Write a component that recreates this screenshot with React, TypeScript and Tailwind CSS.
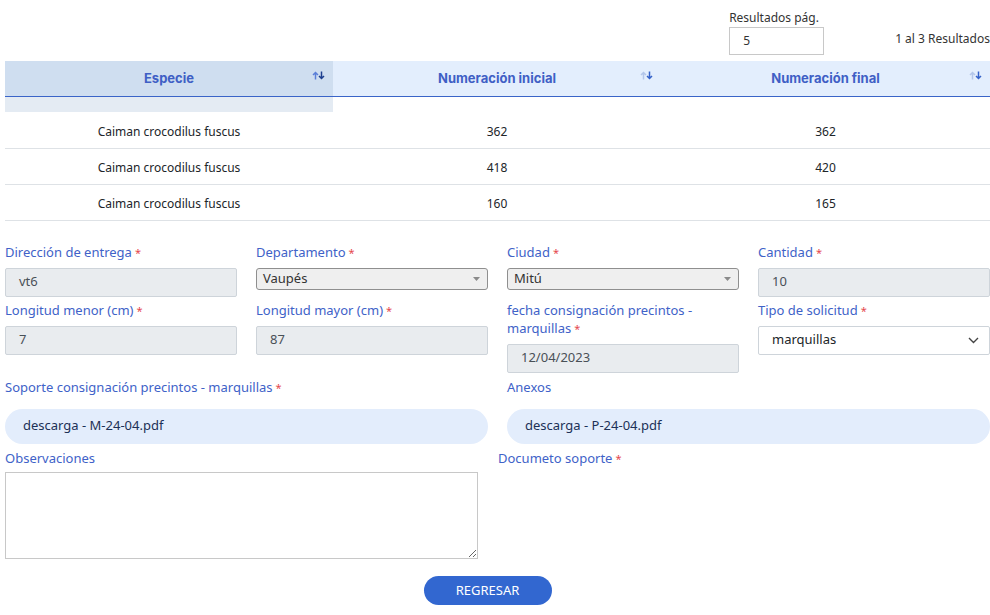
import React from 'react';

const rows = [
  { especie: 'Caiman crocodilus fuscus', inicial: '362', final: '362' },
  { especie: 'Caiman crocodilus fuscus', inicial: '418', final: '420' },
  { especie: 'Caiman crocodilus fuscus', inicial: '160', final: '165' },
];

const SortIcon = ({ active }: { active?: boolean }) => (
  <svg width="13" height="9" viewBox="0 0 13 9" className="absolute right-[8px] top-[10px]">
    <g fill="none" strokeWidth="1.5">
      <path d="M3.5 8.5V1.5M1 4l2.5-2.5L6 4" stroke={active ? '#5b7fd8' : '#b3c6ea'} />
      <path d="M9.5 0.5v7M7 5l2.5 2.5L12 5" stroke={active ? '#1d3f8f' : '#3562c9'} />
    </g>
  </svg>
);

const Req = () => <span className="text-[#e5484d] text-[11px] leading-none ml-[3px]">*</span>;

const Label = ({ children, req }: { children: React.ReactNode; req?: boolean }) => (
  <label className="block text-[13px] leading-[18px] text-[#4062c8] mb-[7px]">
    {children}
    {req && <Req />}
  </label>
);

const ReadInput = ({ value }: { value: string }) => (
  <div className="h-[29px] bg-[#e9ecef] border border-[#ced4da] rounded-[2px] px-[13px] flex items-center text-[13px] text-[#495057]">
    {value}
  </div>
);

const GraySelect = ({ value }: { value: string }) => (
  <div className="h-[22px] bg-[#efefef] border border-[#8f8f8f] rounded-[3px] pl-[6px] pr-[7px] flex items-center justify-between text-[13px] text-[#333]">
    <span>{value}</span>
    <svg width="7" height="4" viewBox="0 0 7 4">
      <path d="M0 0h7L3.5 4z" fill="#8a8a8a" />
    </svg>
  </div>
);

export default function App() {
  return (
    <div className="w-[990px] h-[615px] bg-white pl-[5px] overflow-hidden" style={{ fontFamily: '"Noto Sans", "Open Sans", sans-serif' }}>
      <div className="flex items-end justify-end pt-[9px] h-[61px] pb-[6px]">
        <div className="flex flex-col w-[95px]">
          <span className="text-[12px] leading-[17px] text-[#333] mb-[1px]">Resultados pág.</span>
          <div className="h-[28px] border border-[#c8c8c8] flex items-center pl-[13px] text-[12px] text-[#333]">5</div>
        </div>
        <span className="ml-[71px] mb-[7px] text-[12px] text-[#333]">1 al 3 Resultados</span>
      </div>

      <table className="w-[985px] border-collapse table-fixed">
        <thead>
          <tr className="h-[35px] border-b-[1.5px] border-[#3a64c8]" style={{ fontFamily: 'Inter, "Noto Sans", sans-serif' }}>
            <th className="relative bg-[#cfdef0] text-[13px] font-bold text-[#3f5fc5] w-[328px]">
              Especie
              <SortIcon active />
            </th>
            <th className="relative bg-[#e3eefd] text-[13px] font-bold text-[#3f5fc5] w-[328px]">
              Numeración inicial
              <SortIcon />
            </th>
            <th className="relative bg-[#e3eefd] text-[13px] font-bold text-[#3f5fc5]">
              Numeración final
              <SortIcon />
            </th>
          </tr>
        </thead>
        <tbody>
          <tr className="h-[16px]">
            <td className="bg-[#e4ebf3]"></td>
            <td></td>
            <td></td>
          </tr>
          {rows.map((r, i) => (
            <tr key={i} className="h-[36px] border-b border-[#dee2e6] text-[12px] text-[#212529] text-center">
              <td className="pt-[4px]">{r.especie}</td>
              <td className="pt-[4px]">{r.inicial}</td>
              <td className="pt-[4px]">{r.final}</td>
            </tr>
          ))}
        </tbody>
      </table>

      <div className="w-[985px] grid grid-cols-4 gap-x-[19px] gap-y-[4px] mt-[22px]">
        <div>
          <Label req>Dirección de entrega</Label>
          <ReadInput value="vt6" />
        </div>
        <div>
          <Label req>Departamento</Label>
          <GraySelect value="Vaupés" />
        </div>
        <div>
          <Label req>Ciudad</Label>
          <GraySelect value="Mitú" />
        </div>
        <div>
          <Label req>Cantidad</Label>
          <ReadInput value="10" />
        </div>

        <div>
          <Label req>Longitud menor (cm)</Label>
          <ReadInput value="7" />
        </div>
        <div>
          <Label req>Longitud mayor (cm)</Label>
          <ReadInput value="87" />
        </div>
        <div>
          <Label req>fecha consignación precintos - marquillas</Label>
          <ReadInput value="12/04/2023" />
        </div>
        <div>
          <Label req>Tipo de solicitud</Label>
          <div className="h-[29px] bg-white border border-[#ced4da] rounded-[2px] pl-[13px] pr-[10px] flex items-center justify-between text-[13px] text-[#212529]">
            <span>marquillas</span>
            <svg width="11" height="7" viewBox="0 0 11 7">
              <path d="M1 1l4.5 4.5L10 1" fill="none" stroke="#444" strokeWidth="1.4" />
            </svg>
          </div>
        </div>

        <div className="col-span-2 pt-[1px]">
          <Label req>Soporte consignación precintos - marquillas</Label>
          <div className="mt-[13px] h-[35px] rounded-full bg-[#e3edfc] pl-[18px] flex items-center text-[13px] text-[#1c3157]">
            descarga - M-24-04.pdf
          </div>
        </div>
        <div className="col-span-2 pt-[1px]">
          <Label>Anexos</Label>
          <div className="mt-[13px] h-[35px] rounded-full bg-[#e3edfc] pl-[18px] flex items-center text-[13px] text-[#1c3157]">
            descarga - P-24-04.pdf
          </div>
        </div>
      </div>

      <div className="flex mt-[5px]">
        <div className="w-[493px]">
          <label className="block text-[13px] leading-[18px] text-[#4062c8] mb-[5px]">Observaciones</label>
          <textarea className="block w-[473px] h-[87px] border border-[#c8c8c8] outline-none resize-y" />
        </div>
        <div>
          <label className="block text-[13px] leading-[18px] text-[#4062c8]">
            Documeto soporte
            <Req />
          </label>
        </div>
      </div>

      <div className="flex justify-center pr-[20px] mt-[17px]">
        <button className="w-[128px] h-[29px] pt-[2px] rounded-full bg-[#3267d0] text-white text-[13px]">REGRESAR</button>
      </div>
    </div>
  );
}
